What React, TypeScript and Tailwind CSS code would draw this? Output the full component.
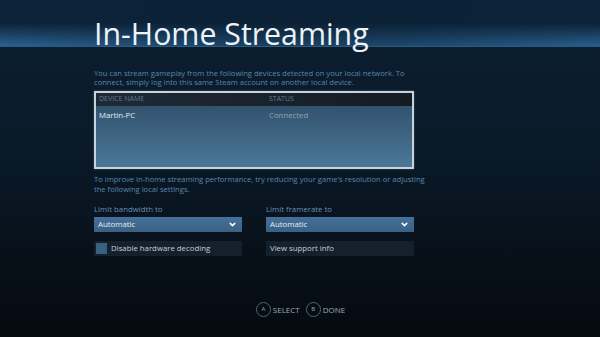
import React from 'react';
import { ChevronDown } from 'lucide-react';

const devices = [{ name: 'Martin-PC', status: 'Connected' }];

const Dropdown = ({ value }: { value: string }) => (
  <div className="flex h-[15px] items-center justify-between bg-[linear-gradient(to_bottom,#45709a,#3a6183)] pl-[4px] pr-[5px] text-[7.8px] text-[#e6edf3]">
    <span>{value}</span>
    <ChevronDown size={9} strokeWidth={4} className="text-white" />
  </div>
);

const PadButton = ({ letter, label }: { letter: string; label: string }) => (
  <div className="flex items-center gap-[2px]">
    <div className="flex h-[15px] w-[15px] items-center justify-center rounded-full border-[1.5px] border-[#56626d] text-[6px] text-[#97a2ab]">
      {letter}
    </div>
    <span className="text-[8px] text-[#a1abb3]">{label}</span>
  </div>
);

export default function App() {
  return (
    <div
      className="flex h-[337px] w-[600px] flex-col overflow-hidden bg-[linear-gradient(to_bottom,#0b1f31_0%,#0a1a29_45%,#070f17_80%,#050a10_100%)]"
      style={{ fontFamily: '"Open Sans", "Noto Sans", sans-serif' }}
    >
      {/* Header band */}
      <div className="h-[47px] shrink-0 border-b border-[#2b5a7e] bg-[linear-gradient(to_right,rgba(10,30,50,0)_0%,rgba(10,30,50,0.5)_45%,rgba(10,30,50,0.35)_70%,rgba(10,30,50,0.05)_100%),linear-gradient(to_bottom,#0c2339_0%,#0c2339_50%,#2a6190_100%)] pl-[94px] pt-[19px]">
        <h1 className="whitespace-nowrap text-[30.3px] leading-none text-[#eef3f7]">In-Home Streaming</h1>
      </div>

      {/* Content */}
      <div className="ml-[94px] mt-[22px] flex w-[320px] flex-col">
        <p className="whitespace-nowrap text-[7.6px] leading-[9px] text-[#5987aa]">
          You can stream gameplay from the following devices detected on your local network. To
          <br />
          connect, simply log into this same Steam account on another local device.
        </p>

        {/* Device table */}
        <div className="mt-[4px] h-[78px] border-2 border-[#c7d2db] bg-[linear-gradient(to_bottom,#2d4b67,#4b7898)] shadow-[0_0_2px_rgba(150,180,200,0.4)]">
          <div className="flex h-[13px] items-center bg-[linear-gradient(to_right,#1f2a37,#151b22)] pl-[3px] text-[7px] text-[#5d7b94]">
            <span className="w-[170px]">DEVICE NAME</span>
            <span>STATUS</span>
          </div>
          {devices.map((d) => (
            <div key={d.name} className="flex h-[19px] items-center pl-[3px] text-[7.8px]">
              <span className="w-[170px] text-[#e3eaf0]">{d.name}</span>
              <span className="text-[#8fa4b5]">{d.status}</span>
            </div>
          ))}
        </div>

        <p className="mt-[6px] whitespace-nowrap text-[7.6px] leading-[9.5px] text-[#5987aa]">
          To improve in-home streaming performance, try reducing your game's resolution or adjusting
          <br />
          the following local settings.
        </p>

        {/* Settings */}
        <div className="mt-[10px] grid grid-cols-2 gap-x-[24px]">
          <div className="flex flex-col">
            <span className="text-[7.8px] leading-[11px] text-[#6791b3]">Limit bandwidth to</span>
            <div className="mt-[2px]">
              <Dropdown value="Automatic" />
            </div>
            <div className="mt-[9px] flex h-[15px] items-center gap-[4px] bg-[#14212d] pl-[2px] text-[7.8px] text-[#c3ced7]">
              <div className="h-[11px] w-[11px] bg-[#3a5f7f]" />
              <span>Disable hardware decoding</span>
            </div>
          </div>
          <div className="flex flex-col">
            <span className="text-[7.8px] leading-[11px] text-[#6791b3]">Limit framerate to</span>
            <div className="mt-[2px]">
              <Dropdown value="Automatic" />
            </div>
            <div className="mt-[9px] flex h-[15px] items-center bg-[#14212d] pl-[4px] text-[7.8px] text-[#c3ced7]">
              View support info
            </div>
          </div>
        </div>
      </div>

      {/* Footer */}
      <div className="mt-[46px] flex justify-center gap-[6px] pl-[1px]">
        <PadButton letter="A" label="SELECT" />
        <PadButton letter="B" label="DONE" />
      </div>
    </div>
  );
}
